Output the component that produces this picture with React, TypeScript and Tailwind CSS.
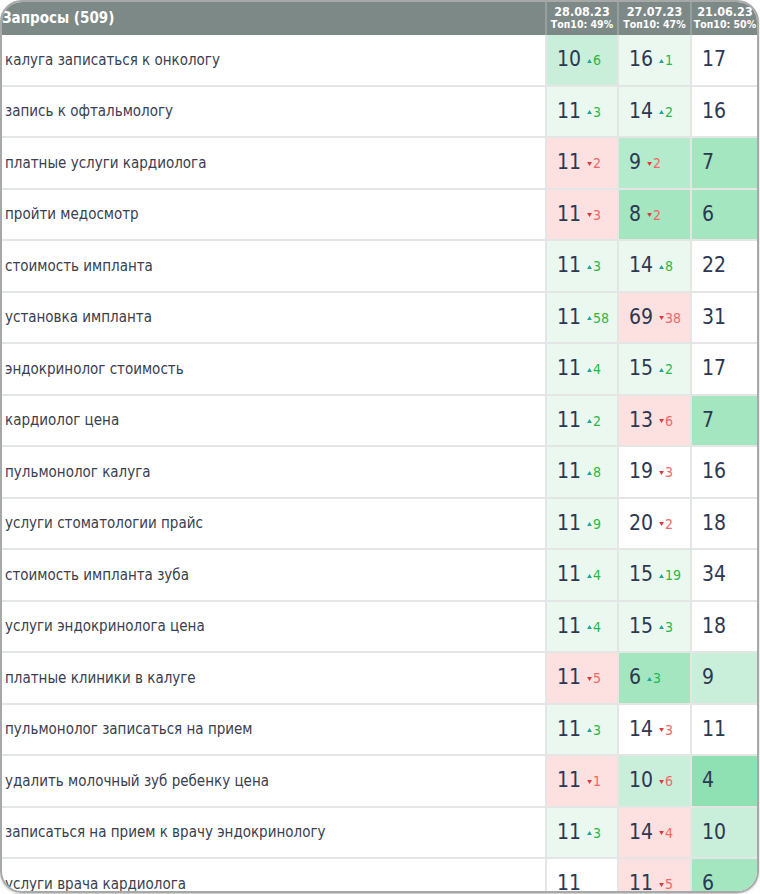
import React from 'react';

type Delta = { dir: 'up' | 'down'; value: number } | null;

interface Cell {
  pos: number;
  delta: Delta;
  bg: string;
}

interface Row {
  query: string;
  cells: Cell[];
}

const W = 'bg-white';
const L = 'bg-[#eaf8f0]';
const M = 'bg-[#c9efda]';
const S = 'bg-[#b4ebcc]';
const G = 'bg-[#a3e6c0]';
const D = 'bg-[#8fe0b2]';
const P = 'bg-[#fde0e0]';

const up = (value: number): Delta => ({ dir: 'up', value });
const down = (value: number): Delta => ({ dir: 'down', value });

const rows: Row[] = [
  { query: 'калуга записаться к онкологу', cells: [{ pos: 10, delta: up(6), bg: M }, { pos: 16, delta: up(1), bg: L }, { pos: 17, delta: null, bg: W }] },
  { query: 'запись к офтальмологу', cells: [{ pos: 11, delta: up(3), bg: L }, { pos: 14, delta: up(2), bg: L }, { pos: 16, delta: null, bg: W }] },
  { query: 'платные услуги кардиолога', cells: [{ pos: 11, delta: down(2), bg: P }, { pos: 9, delta: down(2), bg: S }, { pos: 7, delta: null, bg: G }] },
  { query: 'пройти медосмотр', cells: [{ pos: 11, delta: down(3), bg: P }, { pos: 8, delta: down(2), bg: G }, { pos: 6, delta: null, bg: G }] },
  { query: 'стоимость импланта', cells: [{ pos: 11, delta: up(3), bg: L }, { pos: 14, delta: up(8), bg: L }, { pos: 22, delta: null, bg: W }] },
  { query: 'установка импланта', cells: [{ pos: 11, delta: up(58), bg: L }, { pos: 69, delta: down(38), bg: P }, { pos: 31, delta: null, bg: W }] },
  { query: 'эндокринолог стоимость', cells: [{ pos: 11, delta: up(4), bg: L }, { pos: 15, delta: up(2), bg: L }, { pos: 17, delta: null, bg: W }] },
  { query: 'кардиолог цена', cells: [{ pos: 11, delta: up(2), bg: L }, { pos: 13, delta: down(6), bg: P }, { pos: 7, delta: null, bg: G }] },
  { query: 'пульмонолог калуга', cells: [{ pos: 11, delta: up(8), bg: L }, { pos: 19, delta: down(3), bg: W }, { pos: 16, delta: null, bg: W }] },
  { query: 'услуги стоматологии прайс', cells: [{ pos: 11, delta: up(9), bg: L }, { pos: 20, delta: down(2), bg: W }, { pos: 18, delta: null, bg: W }] },
  { query: 'стоимость импланта зуба', cells: [{ pos: 11, delta: up(4), bg: L }, { pos: 15, delta: up(19), bg: L }, { pos: 34, delta: null, bg: W }] },
  { query: 'услуги эндокринолога цена', cells: [{ pos: 11, delta: up(4), bg: L }, { pos: 15, delta: up(3), bg: L }, { pos: 18, delta: null, bg: W }] },
  { query: 'платные клиники в калуге', cells: [{ pos: 11, delta: down(5), bg: P }, { pos: 6, delta: up(3), bg: G }, { pos: 9, delta: null, bg: M }] },
  { query: 'пульмонолог записаться на прием', cells: [{ pos: 11, delta: up(3), bg: L }, { pos: 14, delta: down(3), bg: W }, { pos: 11, delta: null, bg: W }] },
  { query: 'удалить молочный зуб ребенку цена', cells: [{ pos: 11, delta: down(1), bg: P }, { pos: 10, delta: down(6), bg: M }, { pos: 4, delta: null, bg: D }] },
  { query: 'записаться на прием к врачу эндокринологу', cells: [{ pos: 11, delta: up(3), bg: L }, { pos: 14, delta: down(4), bg: P }, { pos: 10, delta: null, bg: M }] },
  { query: 'услуги врача кардиолога', cells: [{ pos: 11, delta: null, bg: W }, { pos: 11, delta: down(5), bg: P }, { pos: 6, delta: null, bg: G }] },
];

const dates = [
  { date: '28.08.23', top: 'Топ10: 49%' },
  { date: '27.07.23', top: 'Топ10: 47%' },
  { date: '21.06.23', top: 'Топ10: 50%' },
];

const font = "font-['DejaVu_Sans_Condensed','DejaVu_Sans',sans-serif]";

function DeltaMark({ delta }: { delta: Delta }) {
  if (!delta) return null;
  const isUp = delta.dir === 'up';
  return (
    <span className={`ml-[6px] mt-[2px] flex items-center text-[14px] ${isUp ? 'text-[#27b84a]' : 'text-[#f26565]'}`}>
      <svg width="5" height="4" viewBox="0 0 6 5" className={`mr-[1px] ${isUp ? 'fill-[#1fa89a]' : 'fill-[#e0383a]'}`}>
        {isUp ? <path d="M3 0 L6 5 L0 5 Z" /> : <path d="M0 0 L6 0 L3 5 Z" />}
      </svg>
      {delta.value}
    </span>
  );
}

export default function App() {
  return (
    <div className={`w-[760px] h-[894px] bg-white ${font}`}>
      <div className="w-[759px] h-[893px] rounded-[22px] border-2 border-[#a7a9a9] overflow-hidden shadow-[0_1px_2px_rgba(0,0,0,0.25)]">
        <div className="-ml-[2px] -mt-[2px] w-[758px]">
          <div className="grid grid-cols-[547px_72px_73px_66px] h-[35px] bg-[#7d8987] text-white">
            <div className="flex items-center pl-[2px] pt-[1px] text-[15px] font-bold border-r-2 border-[#96a19f]">Запросы (509)</div>
            {dates.map((d, i) => (
              <div key={i} className={`flex flex-col items-center justify-center font-bold leading-[13px] ${i < 2 ? 'border-r-2 border-[#96a19f]' : ''}`}>
                <span className="text-[12.5px]">{d.date}</span>
                <span className="text-[10.5px] whitespace-nowrap">{d.top}</span>
              </div>
            ))}
          </div>
          {rows.map((r, i) => (
            <div key={i} className="grid grid-cols-[547px_72px_73px_66px] h-[51.5px] border-b-2 border-[#e4e6e6]">
              <div className="flex items-center pl-[5px] text-[15px] text-[#39404f] border-r-2 border-[#e4e6e6]">{r.query}</div>
              {r.cells.map((c, j) => (
                <div key={j} className={`flex items-center pl-[10px] ${c.bg} ${j < 2 ? 'border-r-2 border-[#e4e6e6]' : ''}`}>
                  <span className="text-[21px] text-[#2c3852]">{c.pos}</span>
                  <DeltaMark delta={c.delta} />
                </div>
              ))}
            </div>
          ))}
        </div>
      </div>
    </div>
  );
}
